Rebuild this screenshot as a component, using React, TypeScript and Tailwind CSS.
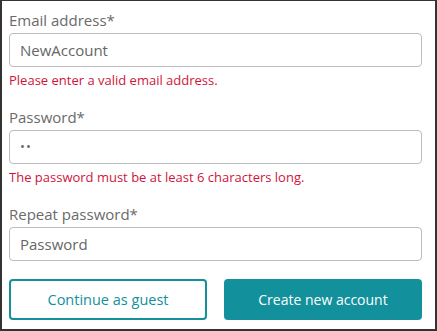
import React from 'react'

const font = { fontFamily: '"Open Sans", "Noto Sans", sans-serif' }

function Field({ label, value, error, dots }: { label: string; value: string; error?: string; dots?: boolean }) {
  return (
    <div className="flex flex-col">
      <div className="h-[20px] leading-[20px] text-[15px] text-[#6a6a6a]">{label}</div>
      <div className="mt-[3px] h-[34px] rounded-[4px] border border-[#bcbcbc] bg-white px-[10px] flex items-center">
        {dots ? (
          <span className="text-[13px] tracking-[1px] text-[#666]">••</span>
        ) : (
          <span className="text-[15px] text-[#666]">{value}</span>
        )}
      </div>
      {error && <div className="mt-[4px] h-[18px] leading-[18px] text-[13px] text-[#d0143c]">{error}</div>}
    </div>
  )
}

export default function App() {
  return (
    <div
      className="w-[437px] h-[331px] bg-white border-t border-l-2 border-r-2 border-b-2 border-[#333] pl-[7px] pr-[13px] pt-[9px]"
      style={font}
    >
      <div className="flex flex-col gap-[18px]">
        <Field label="Email address*" value="NewAccount" error="Please enter a valid email address." />
        <Field label="Password*" value="" dots error="The password must be at least 6 characters long." />
        <Field label="Repeat password*" value="Password" />
        <div className="flex gap-[17px]">
          <button className="w-[198px] h-[41px] rounded-[4px] border-2 border-[#12909b] bg-white text-[14.5px] text-[#12909b]">
            Continue as guest
          </button>
          <button className="flex-1 h-[41px] rounded-[4px] bg-[#12909b] text-[14px] text-white">
            Create new account
          </button>
        </div>
      </div>
    </div>
  )
}
